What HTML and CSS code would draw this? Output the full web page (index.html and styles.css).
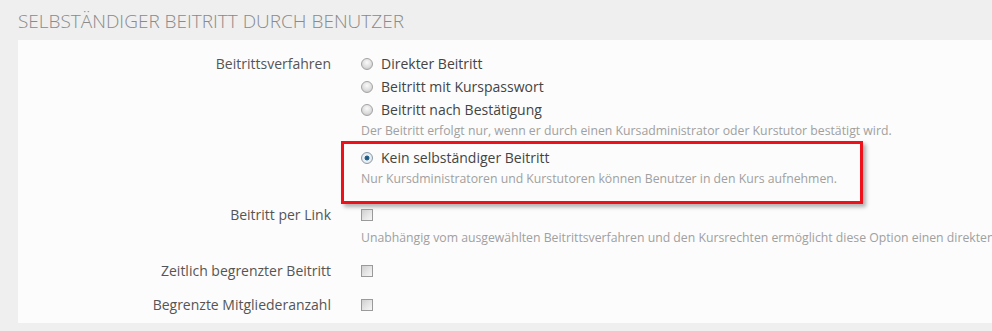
FILE: index.html
```html
<!DOCTYPE html>
<html>
<head>
    <meta charset="utf-8">
    <title>Selbständiger Beitritt durch Benutzer</title>
    <link rel="stylesheet" href="styles.css">
</head>
<body>
    <h3 class="section-title">Selbständiger Beitritt durch Benutzer</h3>

    <div class="panel">
        <div class="form-row">
            <div class="form-label">Beitrittsverfahren</div>
            <div class="form-control">
                <div class="choice"><span class="radio"></span>Direkter Beitritt</div>
                <div class="choice"><span class="radio"></span>Beitritt mit Kurspasswort</div>
                <div class="choice"><span class="radio"></span>Beitritt nach Bestätigung</div>
                <div class="help">Der Beitritt erfolgt nur, wenn er durch einen Kursadministrator oder Kurstutor bestätigt wird.</div>
                <div class="highlight">
                    <div class="choice"><span class="radio checked"></span>Kein selbständiger Beitritt</div>
                    <div class="help">Nur Kursdministratoren und Kurstutoren können Benutzer in den Kurs aufnehmen.</div>
                </div>
            </div>
        </div>

        <div class="form-row">
            <div class="form-label">Beitritt per Link</div>
            <div class="form-control">
                <div class="choice"><span class="checkbox"></span></div>
                <div class="help">Unabhängig vom ausgewählten Beitrittsverfahren und den Kursrechten ermöglicht diese Option einen direkten</div>
            </div>
        </div>

        <div class="form-row">
            <div class="form-label">Zeitlich begrenzter Beitritt</div>
            <div class="form-control">
                <div class="choice"><span class="checkbox"></span></div>
            </div>
        </div>

        <div class="form-row">
            <div class="form-label">Begrenzte Mitgliederanzahl</div>
            <div class="form-control">
                <div class="choice"><span class="checkbox"></span></div>
            </div>
        </div>
    </div>
</body>
</html>
```

FILE: styles.css
```css
* {
    box-sizing: border-box;
}
html, body {
    margin: 0;
    padding: 0;
    background: #efefef;
    overflow: hidden;
}
body {
    font-family: "Open Sans", "Liberation Sans", sans-serif;
    font-size: 14px;
    color: #444;
    padding-left: 18px;
    width: 1100px;
}
.section-title {
    margin: 0;
    padding: 9px 0 7px 0;
    font-size: 19px;
    line-height: 24px;
    font-weight: 300;
    text-transform: uppercase;
    color: #8a8a8a;
}
.panel {
    background: #fcfcfc;
    padding: 12px 0 7px 0;
    margin-bottom: 8px;
}
.form-row {
    display: grid;
    grid-template-columns: 313px 1fr;
    column-gap: 30px;
    margin-bottom: 12px;
}
.form-row:first-child {
    margin-bottom: 0;
}
.form-row:last-child {
    margin-bottom: 0;
}
.form-label {
    text-align: right;
    line-height: 23px;
    color: #555;
    white-space: nowrap;
}
.form-row + .form-row .form-label {
    line-height: 22px;
}
.choice {
    display: flex;
    align-items: center;
    height: 23px;
    white-space: nowrap;
    color: #444;
}
.form-row + .form-row .choice {
    height: 22px;
}
.help {
    font-size: 12.25px;
    line-height: 20px;
    color: #a0a0a0;
    white-space: nowrap;
}
.form-row + .form-row .help {
    margin-top: 2px;
}
.radio {
    display: inline-block;
    width: 12px;
    height: 12px;
    border-radius: 50%;
    border: 1px solid #a3a3a3;
    background: radial-gradient(circle at 50% 35%, #fafafa 0%, #dedede 55%, #bdbdbd 100%);
    margin-right: 8px;
}
.radio.checked {
    border-color: #8a9aa8;
    background: radial-gradient(circle at 50% 50%, #1e4d70 0%, #2c6a94 30%, #eef2f5 40%, #d8dfe5 100%);
}
.checkbox {
    display: inline-block;
    width: 12px;
    height: 12px;
    border: 1px solid #9a9a9a;
    background: linear-gradient(135deg, #cfcfcf 0%, #e8e8e8 60%, #f6f6f6 100%);
}
.highlight {
    width: 522px;
    margin-left: -20px;
    padding: 2px 0 12px 17px;
    border: 3px solid #ee1119;
    box-shadow: 3px 3px 4px rgba(0, 0, 0, 0.3);
}
```
